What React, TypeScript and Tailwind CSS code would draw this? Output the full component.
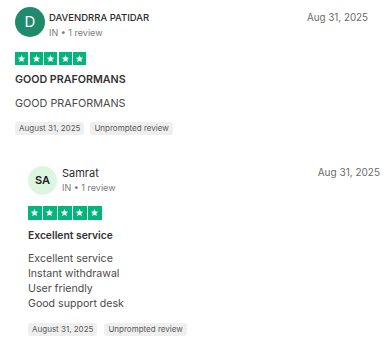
import React from "react";

const Star = () => (
  <svg viewBox="0 0 24 24" className="w-[9px] h-[9px]" fill="#fff">
    <path d="M12 2.5l2.9 6.6 7.1.6-5.4 4.7 1.6 7-6.2-3.7-6.2 3.7 1.6-7L2 9.7l7.1-.6z" />
  </svg>
);

const Stars = ({ size }: { size: number }) => (
  <div className="flex gap-[1.5px]">
    {[0, 1, 2, 3, 4].map((i) => (
      <div
        key={i}
        className="bg-[#00b67a] flex items-center justify-center"
        style={{ width: size, height: size }}
      >
        <Star />
      </div>
    ))}
  </div>
);

const Tag = ({ children }: { children: React.ReactNode }) => (
  <span className="h-[13px] px-[4px] rounded-[3px] bg-[#efefef] text-[#5a5a5a] text-[8px] leading-[13px] flex items-center">
    {children}
  </span>
);

export default function App() {
  return (
    <div
      className="w-[391px] h-[345px] bg-white overflow-hidden"
      style={{ fontFamily: "Inter, 'Liberation Sans', sans-serif" }}
    >
      {/* Review 1 */}
      <div className="pl-[15px] pr-[23px] pt-[7px] flex flex-col">
        <div className="flex items-start">
          <div className="w-[30px] h-[30px] rounded-full bg-[#1f8a6c] text-white flex items-center justify-center text-[15px] shrink-0">
            D
          </div>
          <div className="ml-[4px] flex flex-col">
            <div className="text-[9.5px] leading-[13px] mt-[4px] font-medium text-[#2b2b2b]">
              DAVENDRRA PATIDAR
            </div>
            <div className="text-[9px] leading-[12px] mt-[3px] text-[#7a7a7a]">
              IN • 1 review
            </div>
          </div>
          <div className="ml-auto text-[9.8px] leading-[13px] mt-[4px] text-[#6b6b6b]">
            Aug 31, 2025
          </div>
        </div>
        <div className="mt-[13px]">
          <Stars size={13} />
        </div>
        <div className="mt-[8px] text-[10.7px] leading-[13px] font-semibold text-[#333]">
          GOOD PRAFORMANS
        </div>
        <div className="mt-[11px] text-[10.8px] leading-[13px] text-[#4a4a4a]">
          GOOD PRAFORMANS
        </div>
        <div className="mt-[12px] flex gap-[6px]">
          <Tag>August 31, 2025</Tag>
          <Tag>Unprompted review</Tag>
        </div>
      </div>

      {/* Review 2 */}
      <div className="pl-[28px] pr-[11px] mt-[31px] flex flex-col">
        <div className="flex items-start">
          <div className="w-[29px] h-[29px] rounded-full bg-[#dcf6df] text-[#222] flex items-center justify-center text-[11px] font-semibold shrink-0">
            SA
          </div>
          <div className="ml-[5px] flex flex-col">
            <div className="text-[11px] leading-[14px] text-[#2b2b2b]">Samrat</div>
            <div className="text-[9px] leading-[12px] mt-[2px] text-[#7a7a7a]">
              IN • 1 review
            </div>
          </div>
          <div className="ml-auto text-[10px] leading-[13px] text-[#6b6b6b]">
            Aug 31, 2025
          </div>
        </div>
        <div className="mt-[11px]">
          <Stars size={13.5} />
        </div>
        <div className="mt-[8px] text-[10.3px] leading-[14px] font-semibold text-[#333]">
          Excellent service
        </div>
        <div className="mt-[9px] text-[10.6px] leading-[15.3px] text-[#4a4a4a]">
          <div>Excellent service</div>
          <div>Instant withdrawal</div>
          <div>User friendly</div>
          <div>Good support desk</div>
        </div>
        <div className="mt-[11px] flex gap-[7px]">
          <Tag>August 31, 2025</Tag>
          <Tag>Unprompted review</Tag>
        </div>
      </div>
    </div>
  );
}
